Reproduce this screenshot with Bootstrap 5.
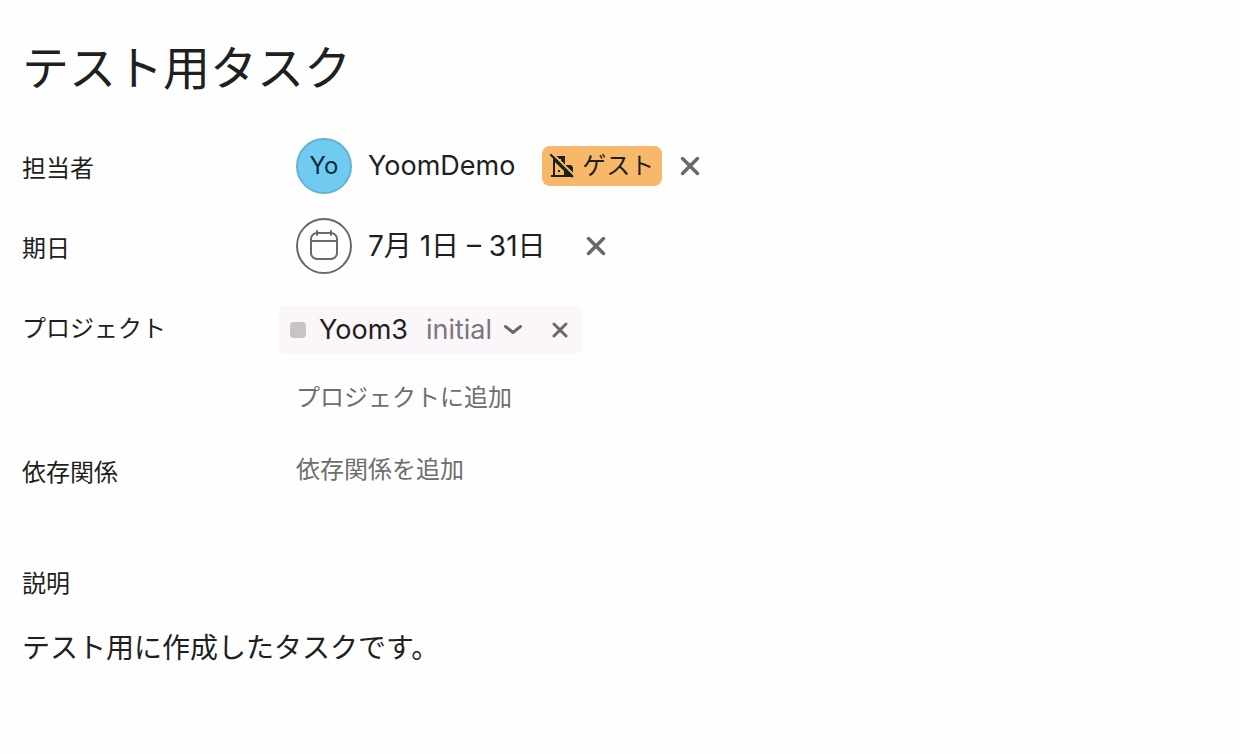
<!DOCTYPE html>
<html lang="ja">
<head>
<meta charset="utf-8">
<meta name="viewport" content="width=device-width, initial-scale=1">
<title>テスト用タスク</title>
<link href="https://cdn.jsdelivr.net/npm/bootstrap@5.3.0/dist/css/bootstrap.min.css" rel="stylesheet">
<style>
  :root { --ink: #1e1f21; --muted-ink: #6d6e6f; --icon-ink: #6b686c; }
  body { background: #fefefe; color: var(--ink); font-family: Inter, "Noto Sans CJK JP", sans-serif; font-size: 28px; line-height: 40px; }
  .task-pane { padding: 40px 22px; }
  .task-title { font-size: 47px; line-height: 56px; font-weight: 400; margin-bottom: 42px; }
  .field-label { flex: 0 0 257px; font-size: 24px; line-height: 40px; font-weight: 400; padding-top: 3px; }
  .tall .field-label { padding-top: 11px; }
  .field-value { padding-left: 17px; }
  .tall .field-value { min-height: 56px; }
  .bare { background: none; border: 0; padding: 0; color: inherit; }
  .latin { font-size: 27px; }
  .disc { width: 56px; height: 56px; flex: none; font-size: 24px; margin-right: 16px; }
  .avatar { background: #6fcbef; border: 2px solid #62b2d2; color: #0d2c3b; }
  .date-disc { border: 2px solid var(--icon-ink); }
  .clear-date { margin-left: 40px; }
  .guest { background: #f8b86b; border-radius: 8px; height: 40px; padding: 0 8px; font-size: 24px; color: #1d2118; margin: 0 18px 0 27px; }
  .chip { background: #faf6fa; border-radius: 6px; height: 48px; padding: 0 14px 0 11px; }
  .swatch { width: 16px; height: 16px; border-radius: 4px; background: #c7c4c7; margin-right: 13px; }
  .section-pick { color: #7a777b; margin: 0 29px 0 18px; }
  .chevron { margin-left: 11px; }
  .add-link { display: block; color: var(--muted-ink); font-size: 24px; line-height: 40px; }
  .description { margin-top: 68px; }
  svg { display: block; }
</style>
</head>
<body>
<main class="task-pane container-fluid">
  <h1 class="task-title">テスト用タスク</h1>

  <div class="tall d-flex mb-4">
    <h2 class="field-label mb-0">担当者</h2>
    <div class="field-value d-flex align-items-center">
      <span class="disc avatar rounded-circle d-flex align-items-center justify-content-center">Yo</span>
      <button type="button" class="bare latin">YoomDemo</button>
      <span class="guest d-flex align-items-center gap-2">
        <svg width="24" height="24" viewBox="0 0 24 24" aria-hidden="true">
          <path fill="#1d2118" fill-rule="evenodd" d="M3 2h12v9h6l2 2v10H1v-2h2zM5 8v13h9v-4zM9 5v2h2V5zM8 16v2h2v-2z"/>
          <path stroke="#f8b86b" stroke-width="2" d="M3 0l21 21"/>
          <path stroke="#1d2118" stroke-width="2" d="M0 0l23 23"/>
        </svg>
        ゲスト
      </span>
      <button type="button" class="bare" aria-label="担当者を削除">
        <svg width="20" height="20" viewBox="0 0 20 20" fill="none" stroke="#6b686c" stroke-width="3.500" stroke-linecap="round"><path d="M2.500 2.500l15 15M17.500 2.500l-15 15"/></svg>
      </button>
    </div>
  </div>

  <div class="tall d-flex mb-4">
    <h2 class="field-label mb-0">期日</h2>
    <div class="field-value d-flex align-items-center">
      <span class="disc date-disc rounded-circle d-flex align-items-center justify-content-center">
        <svg width="30" height="32" viewBox="0 0 30 32" fill="none" stroke="#6b686c" stroke-width="2" stroke-linecap="round"><rect x="2" y="3" width="26" height="26" rx="6"/><path d="M2 11h26M8 1v4M22 1v4"/></svg>
      </span>
      <button type="button" class="bare">7月 1日 – 31日</button>
      <button type="button" class="bare clear-date" aria-label="期日を削除">
        <svg width="20" height="20" viewBox="0 0 20 20" fill="none" stroke="#6b686c" stroke-width="3.500" stroke-linecap="round"><path d="M2.500 2.500l15 15M17.500 2.500l-15 15"/></svg>
      </button>
    </div>
  </div>

  <div class="d-flex pt-2">
    <h2 class="field-label mb-0">プロジェクト</h2>
    <div>
      <div class="chip d-flex align-items-center">
        <span class="swatch"></span>
        <button type="button" class="bare latin">Yoom3</button>
        <button type="button" class="bare latin section-pick d-flex align-items-center">initial
          <svg class="chevron" width="20" height="12" viewBox="0 0 20 12" fill="none" stroke="#6b686c" stroke-width="3" stroke-linecap="round" stroke-linejoin="round"><path d="M2.500 2.500l7.500 6 7.500-6"/></svg>
        </button>
        <button type="button" class="bare" aria-label="プロジェクトから削除">
          <svg width="16" height="16" viewBox="0 0 16 16" fill="none" stroke="#6b686c" stroke-width="3" stroke-linecap="round"><path d="M2 2l12 12M14 2l-12 12"/></svg>
        </button>
      </div>
      <div class="field-value pt-4">
        <button type="button" class="bare add-link">プロジェクトに追加</button>
      </div>
    </div>
  </div>

  <div class="d-flex mt-4 pt-2">
    <h2 class="field-label mb-0">依存関係</h2>
    <div class="field-value">
      <button type="button" class="bare add-link">依存関係を追加</button>
    </div>
  </div>

  <section class="description">
    <h2 class="field-label mb-4">説明</h2>
    <p class="mb-0">テスト用に作成したタスクです。</p>
  </section>
</main>
<script src="https://cdn.jsdelivr.net/npm/bootstrap@5.3.0/dist/js/bootstrap.bundle.min.js"></script>
</body>
</html>
